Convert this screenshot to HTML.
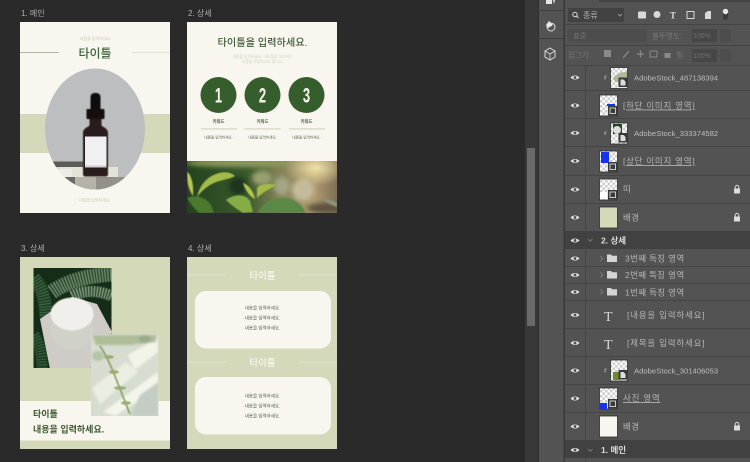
<!DOCTYPE html>
<html lang="ko"><head><meta charset="utf-8">
<style>
html,body{margin:0;padding:0;background:#2a2a2a;width:750px;height:462px;overflow:hidden}
svg{display:block;filter:blur(.35px)}
text{font-family:"Liberation Sans","Noto Sans CJK KR",sans-serif}
.lb{font-size:8px;fill:#b0b0b0}
.ly{font-size:7.600px;fill:#bdbdbd;letter-spacing:.05px}
.lk{font-size:8.500px;fill:#b5b5b5;letter-spacing:.35px}
.lu{font-size:8.500px;fill:#b5b5b5;letter-spacing:.75px}
.m{text-anchor:middle}
</style></head><body>
<svg width="750" height="462" viewBox="0 0 750 462" xmlns="http://www.w3.org/2000/svg">
<defs>
<filter id="b1"><feGaussianBlur stdDeviation="1"/></filter>
<filter id="b2"><feGaussianBlur stdDeviation="2.500"/></filter>
<filter id="b05"><feGaussianBlur stdDeviation=".5"/></filter>
<clipPath id="ov"><ellipse cx="95" cy="129" rx="50" ry="60.500"/></clipPath>
<clipPath id="leaf"><rect x="187" y="161" width="150" height="52"/></clipPath>
<clipPath id="c1"><rect x="33.500" y="268" width="78" height="100"/></clipPath>
<clipPath id="c2"><rect x="91" y="334" width="67.500" height="82"/></clipPath>
<pattern id="ck" width="5" height="5" patternUnits="userSpaceOnUse"><rect width="5" height="5" fill="#fff"/><rect width="2.500" height="2.500" fill="#ccc"/><rect x="2.500" y="2.500" width="2.500" height="2.500" fill="#ccc"/></pattern>
<linearGradient id="lg" x1="0" x2="1" y1="0" y2="0"><stop offset="0" stop-color="#24421f"/><stop offset=".4" stop-color="#3a5a2c"/><stop offset=".6" stop-color="#7f8054"/><stop offset=".85" stop-color="#b09a70"/><stop offset="1" stop-color="#7e6e54"/></linearGradient>
<radialGradient id="sun" cx=".5" cy=".5" r=".5"><stop offset="0" stop-color="#f3e6a8" stop-opacity=".95"/><stop offset="1" stop-color="#e6d9a0" stop-opacity="0"/></radialGradient>
<g id="eye"><path d="M-4.500 0Q0-4 4.500 0Q0 4-4.500 0Z" fill="#ececec"/><circle r="1.500" fill="#535353"/></g>
<g id="lock"><rect x="-3" y="-1" width="6" height="5" rx=".5" fill="#dcdcdc"/><path d="M-1.800-1V-2.300a1.800 1.800 0 0 1 3.600 0V-1" fill="none" stroke="#dcdcdc" stroke-width="1"/></g>
<g id="fold"><path d="M0 0h4l1 1.300h5v6.200H0z" fill="#d4d4d4"/></g>
<g id="chev"><path d="M0-2.500 2.200 0 0 2.500" fill="none" stroke="#8e8e8e" stroke-width=".7"/></g>
<g id="mask"><rect x="9" y="9" width="9.500" height="9.500" fill="#3a3a3a"/><rect x="11" y="11" width="5.500" height="5.500" fill="none" stroke="#ccc" stroke-width="1"/></g>
<g id="sm"><rect x="9" y="9" width="9.500" height="9.500" fill="#3a3a3a"/><path d="M11 11h3l2 2v4h-5z" fill="#ddd"/></g>
</defs>

<rect width="750" height="462" fill="#2a2a2a"/>

<text x="21" y="16" class="lb">1. 메인</text>
<text x="188" y="16" class="lb">2. 상세</text>
<text x="21" y="251" class="lb">3. 상세</text>
<text x="188" y="251" class="lb">4. 상세</text>

<!-- Artboard 1 -->
<rect x="20" y="22" width="150" height="191" fill="#f9f6ef"/>
<rect x="20" y="114" width="150" height="39" fill="#d4d9b9"/>
<rect x="20" y="52" width="39" height=".9" fill="#a9b095"/>
<rect x="132" y="52" width="38" height=".9" fill="#dfe0cc"/>
<text x="95" y="40" class="m" font-size="4" fill="#c9cbb0">내용을 입력하세요</text>
<text x="95" y="57.500" class="m" font-size="12" fill="#3e6239" font-weight="500">타이틀</text>
<ellipse cx="95" cy="129" rx="50" ry="60.500" fill="#bdbebf"/>
<g clip-path="url(#ov)">
<rect x="40" y="161.500" width="43" height="5.500" fill="#5c5c56"/>
<rect x="40" y="167" width="43" height="2" fill="#d8d8d2"/>
<rect x="60" y="167" width="58" height="10" fill="#e3e3d6"/>
<rect x="40" y="169" width="32" height="9" fill="#ecece6"/>
<rect x="40" y="177" width="110" height="15" fill="#aeab9f"/>
<rect x="64" y="177" width="11" height="15" fill="#6b6a64"/>
<rect x="75" y="177" width="21" height="15" fill="#b5b3a8"/>
<rect x="96" y="177" width="30" height="15" fill="#94918a"/>
</g>
<g filter="url(#b05)">
<rect x="90.500" y="93" width="10" height="20" rx="4" fill="#0e0d0d"/>
<rect x="86.500" y="109" width="18" height="10" rx="1" fill="#131111"/>
<path d="M89.500 119h12v6c0 2 6.500 2.500 6.500 8v41c0 2-1 2.500-2.500 2.500h-20c-1.500 0-2.500-.5-2.500-2.500v-41c0-5.500 6.500-6 6.500-8z" fill="#2a1e1b"/>
</g>
<rect x="85" y="136.500" width="21.500" height="31" fill="#f0eff2"/>
<rect x="85" y="165.500" width="21.500" height="2" fill="#cfcfd0"/>
<text x="95" y="201.500" class="m" font-size="4" fill="#c9cbb0">내용을 입력하세요.</text>

<!-- Artboard 2 -->
<rect x="187" y="22" width="150" height="191" fill="#f9f6ef"/>
<text x="262.500" y="46" class="m" font-size="10.200" fill="#3e5c38" font-weight="500">타이틀을 입력하세요.</text>
<text x="262.500" y="58" class="m" font-size="3.800" fill="#d0d2ba">내용을 입력하세요. 타이틀을 보조하는</text>
<text x="262.500" y="63" class="m" font-size="3.800" fill="#d0d2ba">내용을 작성하시도 됩니다.</text>
<g fill="#365e2d"><circle cx="218.500" cy="95" r="18"/><circle cx="262.500" cy="95" r="18"/><circle cx="306.500" cy="95" r="18"/></g>
<g font-weight="700" fill="#f9f6ef" style="text-anchor:middle" font-size="21">
<text transform="translate(218.500 102.500) scale(.62 1)">1</text>
<text transform="translate(262.500 102.500) scale(.62 1)">2</text>
<text transform="translate(306.500 102.500) scale(.62 1)">3</text>
</g>
<g font-size="4.300" font-weight="700" fill="#46583d" style="text-anchor:middle">
<text x="218.500" y="123">키워드</text><text x="262.500" y="123">키워드</text><text x="306.500" y="123">키워드</text></g>
<g fill="#c5cbb2"><rect x="201" y="128.500" width="36" height=".9"/><rect x="244.500" y="128.500" width="36" height=".9"/><rect x="289" y="128.500" width="36" height=".9"/></g>
<g font-size="3.600" fill="#5a6350" style="text-anchor:middle">
<text x="218.500" y="138.500">내용을 입력하세요.</text><text x="262.500" y="138.500">내용을 입력하세요.</text><text x="306.500" y="138.500">내용을 입력하세요.</text></g>
<g clip-path="url(#leaf)">
<rect x="187" y="161" width="150" height="52" fill="url(#lg)"/>
<g filter="url(#b2)">
<ellipse cx="240" cy="163" rx="55" ry="4" fill="#8e9a5c"/>
<ellipse cx="262" cy="178" rx="10" ry="7" fill="#98a070"/>
<ellipse cx="282" cy="186" rx="8" ry="9" fill="#a5a684"/>
<ellipse cx="303" cy="190" rx="11" ry="11" fill="#c4bb9b"/>
<ellipse cx="238" cy="186" rx="9" ry="9" fill="#1a341a"/>
<ellipse cx="325" cy="208" rx="18" ry="5" fill="#5c5340"/>
</g>
<ellipse cx="316" cy="168" rx="32" ry="18" fill="url(#sun)"/>
<g filter="url(#b05)">
<path d="M197 197C200 184 208 176 219 173C226 171 232 173 235 176C228 180 218 180 210 185C205 188 200 193 197 197Z" fill="#a3bb4c"/>
<path d="M187 172C191 174 194 184 193 196C189 190 187 184 187 172Z" fill="#b8c552"/>
<path d="M187 198C197 194 206 198 211 205L214 213H199C193 207 190 203 187 198Z" fill="#4a7a2e"/>
<path d="M226 200C234 194 245 193 250 201L253 212L243 213C235 208 230 204 226 200Z" fill="#85ac44"/>
<path d="M243 183C248 184 254 192 255 199C250 197 245 190 243 183Z" fill="#b5c450"/>
<path d="M257 188C260 184 268 183 276 185C270 189 263 192 257 198Z" fill="#a4bb4a"/>
<path d="M258 213C261 203 274 197 287 198C298 200 303 207 306 213Z" fill="#5b8847"/>
<path d="M322 199C328 199 335 201 337 203V207C331 205 326 202 322 199Z" fill="#8d9379"/>
</g>
</g>

<!-- Artboard 3 -->
<rect x="20" y="257" width="150" height="192" fill="#d4d9b9"/>
<rect x="20" y="401" width="150" height="39.500" fill="#f9f6ef"/>
<g clip-path="url(#c1)">
<rect x="33.500" y="268" width="78" height="100" fill="#152c19"/>
<g filter="url(#b05)" fill="none" stroke-dasharray="1.300 1.500">
<path d="M52 292C66 282 84 276 112 274" stroke="#8cb088" stroke-width="15"/>
<path d="M72 296C84 290 98 290 112 296" stroke="#a4c29e" stroke-width="11"/>
<path d="M34 278C42 288 46 300 46 318" stroke="#44794b" stroke-width="13"/>
<path d="M34 335C40 345 42 355 42 368" stroke="#3d7045" stroke-width="11"/>
<path d="M92 362C98 358 104 356 112 355" stroke="#3d7045" stroke-width="9"/>
</g>
<path d="M40 319L72 297L97 304L112 332L90 369H50Z" fill="#cfcbc6"/>
<ellipse cx="72" cy="330" rx="21" ry="20" fill="#d0d1c9" filter="url(#b05)"/>
<ellipse cx="72" cy="314" rx="21.500" ry="16.500" fill="#f0efeb" filter="url(#b05)"/>
</g>
<g clip-path="url(#c2)">
<rect x="91" y="334" width="67.500" height="82" fill="#d6ddd0"/>
<g filter="url(#b1)">
<path d="M128 355L158 338V352L135 370Z" fill="#f2f4e8"/>
<path d="M103 412L158 372V388L115 416Z" fill="#f3f5ea"/>
<path d="M92 388L126 362L138 372L100 404Z" fill="#ebefe2"/>
<path d="M140 395L158 382V416H130Z" fill="#c4cdc4"/>
<path d="M92 335H156V342L130 345H96Z" fill="#aebd98"/>
<ellipse cx="98" cy="356" rx="6" ry="5" fill="#b4c4a6"/>
<ellipse cx="145" cy="339" rx="6" ry="4" fill="#9aaa8e"/>
</g>
<path d="M100 346C110 360 118 385 130 414" stroke="#8a9b63" stroke-width="1.600" fill="none" filter="url(#b05)"/>
<g fill="#9aaa70" filter="url(#b05)"><ellipse cx="109" cy="357" rx="5" ry="1.800"/><ellipse cx="114" cy="372" rx="5" ry="1.800"/><ellipse cx="120" cy="388" rx="6" ry="1.800"/><ellipse cx="126" cy="403" rx="5" ry="1.800"/></g>
</g>
<text x="33" y="417" font-size="9" font-weight="700" fill="#3d5a33">타이틀</text>
<text x="33" y="432.500" font-size="9" font-weight="700" fill="#3d5a33">내용을 입력하세요.</text>

<!-- Artboard 4 -->
<rect x="187" y="257" width="150" height="192" fill="#d4d9b9"/>
<rect x="187" y="274.500" width="39" height=".9" fill="#e3e5d0"/><rect x="298.500" y="274.500" width="38.500" height=".9" fill="#e3e5d0"/>
<rect x="187" y="361.700" width="39" height=".9" fill="#e3e5d0"/><rect x="298.500" y="361.700" width="38.500" height=".9" fill="#e3e5d0"/>
<text x="262.500" y="279" class="m" font-size="9.500" fill="#f9f6ef" font-weight="500">타이틀</text>
<text x="262.500" y="366" class="m" font-size="9.500" fill="#f9f6ef" font-weight="500">타이틀</text>
<rect x="195" y="291" width="136" height="57.500" rx="11" fill="#f9f6ef"/>
<rect x="195" y="377" width="136" height="57.500" rx="11" fill="#f9f6ef"/>
<g font-size="4.500" fill="#4b5742" style="text-anchor:middle">
<text x="262.500" y="309.500">내용을 입력하세요.</text><text x="262.500" y="319.500">내용을 입력하세요.</text><text x="262.500" y="329.500">내용을 입력하세요.</text>
<text x="262.500" y="397.500">내용을 입력하세요.</text><text x="262.500" y="407.500">내용을 입력하세요.</text><text x="262.500" y="417.500">내용을 입력하세요.</text>
</g>

<!-- Right UI -->
<rect x="525" y="0" width="13" height="462" fill="#383838"/>
<rect x="527" y="148" width="8" height="178" fill="#6a6a6a"/>
<rect x="538" y="0" width="27" height="462" fill="#535353"/>
<rect x="538" y="0" width="1" height="462" fill="#2e2e2e"/>
<rect x="563.500" y="0" width="1.500" height="462" fill="#3a3a3a"/>
<rect x="565" y="0" width="185" height="462" fill="#535353"/>
<rect x="599" y="0" width="151" height="2" fill="#444"/>
<rect x="538" y="10" width="26" height="1" fill="#3e3e3e"/>
<rect x="538" y="38" width="26" height="1" fill="#3e3e3e"/>
<path d="M546 0h6v4h-6zM553 0h2l-1 4z" fill="#e6e6e6"/>
<path d="M549 21l4 4-5 3-2-3z" fill="#eee"/><circle cx="551" cy="27" r="4" fill="none" stroke="#ddd" stroke-width="1"/>
<path d="M550 48l5 3v6l-5 3-5-3v-6z" fill="none" stroke="#ddd" stroke-width="1"/><path d="M545 51l5 3 5-3M550 54v6" fill="none" stroke="#ddd" stroke-width=".8"/>

<rect x="568" y="8" width="56" height="14" rx="1" fill="#424242"/>
<circle cx="575" cy="14.500" r="2.200" fill="none" stroke="#ddd" stroke-width="1"/><path d="M576.500 16l2 2" stroke="#ddd" stroke-width="1"/>
<text x="583" y="18" font-size="8" fill="#bbb">종류</text>
<path d="M618 14l2 2 2-2" fill="none" stroke="#aaa" stroke-width=".8"/>
<rect x="638" y="11.500" width="8" height="7" rx="1" fill="#d8d8d8"/><circle cx="657" cy="14.500" r="3.500" fill="#d8d8d8"/>
<text x="670" y="18.500" font-size="9" fill="#dcdcdc" font-weight="700" style="font-family:'Liberation Serif',serif">T</text>
<rect x="687" y="11.500" width="7" height="7" fill="none" stroke="#d8d8d8" stroke-width="1"/>
<path d="M705 19v-6l3-2h3v8z" fill="#d8d8d8"/>
<rect x="723" y="9" width="5" height="11" rx="2.500" fill="#3b3b3b"/><circle cx="725.500" cy="11.500" r="2.700" fill="#e8e8e8"/>
<rect x="565" y="24" width="185" height="1" fill="#444"/>
<rect x="568" y="29" width="79" height="13" rx="1" fill="#4d4d4d"/>
<text x="573" y="38.500" font-size="7.500" fill="#747474">표준</text>
<text x="652" y="38.500" font-size="7.500" fill="#787878">불투명도:</text>
<rect x="692" y="29" width="25" height="13" fill="#474747"/>
<text x="693" y="38" font-size="7" fill="#707070">100%</text>
<rect x="720" y="29" width="11" height="13" fill="#4d4d4d"/>
<rect x="565" y="45" width="185" height="1" fill="#444"/>
<text x="568" y="57.500" font-size="7.500" fill="#777">잠그기:</text>
<rect x="604" y="50" width="7" height="7" fill="#8a8a8a"/>
<path d="M623 58l6-7" stroke="#8a8a8a" stroke-width="1.300"/>
<path d="M637 54h7M640.500 50.500v7" stroke="#8a8a8a" stroke-width="1.200"/>
<rect x="650" y="51" width="7" height="6" fill="none" stroke="#8a8a8a"/>
<rect x="664.500" y="53" width="6" height="5" fill="#8a8a8a"/>
<text x="676" y="57.500" font-size="7.500" fill="#777">칠:</text>
<rect x="692" y="49" width="25" height="13" fill="#474747"/>
<text x="693" y="58" font-size="7" fill="#707070">100%</text>
<rect x="720" y="49" width="11" height="13" fill="#4d4d4d"/>
<rect x="565" y="65" width="185" height="1" fill="#444"/>

<g fill="#454545">
<rect x="565" y="90" width="185" height="1"/><rect x="565" y="118" width="185" height="1"/><rect x="565" y="146" width="185" height="1"/><rect x="565" y="175" width="185" height="1"/><rect x="565" y="203" width="185" height="1"/><rect x="565" y="266" width="185" height="1"/><rect x="565" y="283" width="185" height="1"/><rect x="565" y="300" width="185" height="1"/><rect x="565" y="328" width="185" height="1"/><rect x="565" y="356" width="185" height="1"/><rect x="565" y="384" width="185" height="1"/><rect x="565" y="412" width="185" height="1"/>
<rect x="585" y="66" width="1" height="396"/>
</g>
<rect x="565" y="231" width="185" height="18" fill="#414141"/>
<rect x="565" y="440" width="185" height="18" fill="#414141"/>

<g>
<use href="#eye" x="575" y="77.500"/><use href="#eye" x="575" y="105.500"/><use href="#eye" x="575" y="133"/><use href="#eye" x="575" y="161"/><use href="#eye" x="575" y="189.500"/><use href="#eye" x="575" y="217.500"/><use href="#eye" x="575" y="240.500"/><use href="#eye" x="575" y="258.500"/><use href="#eye" x="575" y="275"/><use href="#eye" x="575" y="292"/><use href="#eye" x="575" y="315"/><use href="#eye" x="575" y="343"/><use href="#eye" x="575" y="370.500"/><use href="#eye" x="575" y="398.500"/><use href="#eye" x="575" y="426.500"/><use href="#eye" x="575" y="450"/>
</g>

<g stroke="#2e2e2e" stroke-width=".8">
<rect x="610.500" y="67.500" width="17" height="21" fill="url(#ck)"/>
<rect x="599.500" y="95" width="18" height="21" fill="url(#ck)"/>
<rect x="610.500" y="123" width="17" height="21" fill="url(#ck)"/>
<rect x="599.500" y="151" width="18" height="21" fill="url(#ck)"/>
<rect x="599.500" y="179" width="18" height="21" fill="url(#ck)"/>
<rect x="599.500" y="207" width="18" height="21" fill="#d4d9b9"/>
<rect x="610.500" y="360" width="17" height="21" fill="url(#ck)"/>
<rect x="599.500" y="388" width="18" height="21" fill="url(#ck)"/>
<rect x="599.500" y="416" width="18" height="21" fill="#f9f6ef"/>
</g>
<path d="M613 78c4-5 8-6 14-6v5c-4 0-6 2-8 5h-4z" fill="#b0b89a"/>
<rect x="607" y="104" width="8" height="2" fill="#1634ee"/>
<rect x="613" y="124" width="9" height="10" fill="#29402a"/><circle cx="617" cy="130" r="4" fill="#ddd"/>
<rect x="601" y="152" width="8" height="11" fill="#1634ee"/>
<rect x="600" y="192" width="7" height="7" fill="#fff"/>
<rect x="613" y="372" width="7" height="8" fill="#6d8c30"/>
<rect x="600" y="403" width="7" height="6" fill="#1634ee"/>
<use href="#sm" x="609.500" y="68.500"/>
<use href="#mask" x="599" y="97"/>
<use href="#sm" x="609.500" y="124"/>
<use href="#mask" x="599" y="153"/>
<use href="#mask" x="599" y="181"/>
<use href="#sm" x="609.500" y="361"/>
<use href="#mask" x="599" y="390"/>

<g fill="none" stroke="#c8c8c8" stroke-width=".8">
<path d="M605 76v3.500M605 76h1.500"/><path d="M605 132v3M605 132h1.500"/><path d="M605 369v3.500M605 369h1.500"/>
</g>

<text x="634" y="80.500" class="ly">AdobeStock_487138394</text>
<text x="623" y="108.500" class="lu" text-decoration="underline">[하단 이미지 영역]</text>
<text x="634" y="136" class="ly">AdobeStock_333374582</text>
<text x="623" y="164" class="lu" text-decoration="underline">[상단 이미지 영역]</text>
<text x="623" y="192" class="lk">띠</text>
<text x="623" y="220.500" class="lk">배경</text>
<path d="M588 239l2.200 2.200 2.200-2.200" fill="none" stroke="#8e8e8e" stroke-width=".7"/>
<text x="601" y="243.500" font-size="8.500" font-weight="700" fill="#dcdcdc">2. 상세</text>
<use href="#chev" x="600.500" y="258.500"/><use href="#chev" x="600.500" y="275"/><use href="#chev" x="600.500" y="292"/>
<use href="#fold" x="607" y="254.500"/><use href="#fold" x="607" y="271"/><use href="#fold" x="607" y="288"/>
<text x="625" y="261.500" class="lk">3번째 특징 영역</text>
<text x="625" y="278" class="lk">2번째 특징 영역</text>
<text x="625" y="295.500" class="lk">1번째 특징 영역</text>
<text x="604" y="321" font-size="14" fill="#d8d8d8" style="font-family:'Liberation Serif',serif">T</text>
<text x="604" y="349" font-size="14" fill="#d8d8d8" style="font-family:'Liberation Serif',serif">T</text>
<text x="627" y="318" class="lk" style="letter-spacing:.8px">[내용을 입력하세요]</text>
<text x="627" y="346" class="lk" style="letter-spacing:.8px">[제목을 입력하세요]</text>
<text x="634" y="373.500" class="ly">AdobeStock_301406053</text>
<text x="623" y="401" class="lu" text-decoration="underline">사진 영역</text>
<text x="623" y="429.500" class="lk">배경</text>
<path d="M588 449l2.200 2.200 2.200-2.200" fill="none" stroke="#8e8e8e" stroke-width=".7"/>
<text x="601" y="453" font-size="8.500" font-weight="700" fill="#dcdcdc">1. 메인</text>
<use href="#lock" x="737" y="189.500"/><use href="#lock" x="737" y="217.500"/><use href="#lock" x="737" y="426.500"/>
</svg>
</body></html>
